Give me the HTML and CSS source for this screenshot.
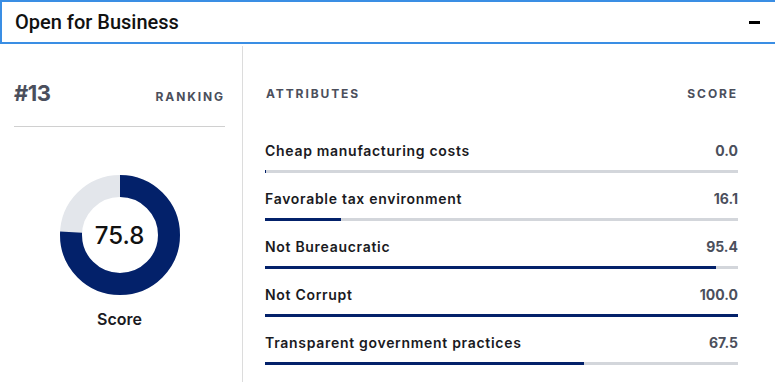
FILE: index.html
```html
<!DOCTYPE html>
<html lang="en">
<head>
  <meta charset="UTF-8" />
  <meta name="viewport" content="width=device-width, initial-scale=1.0"/>
  <title>Open for Business</title>
  <link rel="stylesheet" href="styles.css">
</head>
<body>

  <section class="panel">
    <div class="panel-head">
      <h2>Open for Business</h2>
      <span class="toggle"></span>
    </div>

    <div class="panel-body">
      <div class="summary">
        <div class="rank-row">
          <span class="rank">#13</span>
          <span class="caption">Ranking</span>
        </div>

        <div class="donut">
          <svg width="120" height="120" viewBox="0 0 120 120">
            <circle cx="60" cy="60" r="49" fill="none" stroke="#e3e6eb" stroke-width="22"/>
            <circle cx="60" cy="60" r="49" fill="none" stroke="#03216a" stroke-width="22"
              stroke-dasharray="233.4 307.9" transform="rotate(-90 60 60)"/>
          </svg>
          <span class="donut-value">75.8</span>
        </div>
        <div class="donut-label">Score</div>
      </div>

      <div class="attributes">
        <div class="attr-head">
          <span class="caption">Attributes</span>
          <span class="caption">Score</span>
        </div>

        <div class="attr">
          <div class="attr-line"><span>Cheap manufacturing costs</span><span class="val">0.0</span></div>
          <div class="bar"><div class="fill" style="width:0.3%"></div></div>
        </div>
        <div class="attr">
          <div class="attr-line"><span>Favorable tax environment</span><span class="val">16.1</span></div>
          <div class="bar"><div class="fill" style="width:16.1%"></div></div>
        </div>
        <div class="attr">
          <div class="attr-line"><span>Not Bureaucratic</span><span class="val">95.4</span></div>
          <div class="bar"><div class="fill" style="width:95.4%"></div></div>
        </div>
        <div class="attr">
          <div class="attr-line"><span>Not Corrupt</span><span class="val">100.0</span></div>
          <div class="bar"><div class="fill" style="width:100%"></div></div>
        </div>
        <div class="attr">
          <div class="attr-line"><span>Transparent government practices</span><span class="val">67.5</span></div>
          <div class="bar"><div class="fill" style="width:67.5%"></div></div>
        </div>
      </div>
    </div>
  </section>

</body>
</html>
```

FILE: styles.css
```css
*, *::before, *::after {
  box-sizing: border-box;
}

* {
  margin: 0;
}

body {
  margin: 0;
  background: #fff;
  font-family: 'Inter', sans-serif;
  -webkit-font-smoothing: antialiased;
  overflow: hidden;
}

/* header bar */
.panel-head {
  height: 44px;
  border: 2px solid #3a8ee4;
  border-right: none;
  display: flex;
  align-items: center;
  justify-content: space-between;
  padding: 0 15px 0 13px;
}

.panel-head h2 {
  font-family: 'Roboto', sans-serif;
  font-size: 20px;
  font-weight: 500;
  color: #111;
  line-height: 1;
  margin-top: -1px;
}

.toggle {
  width: 11px;
  height: 3px;
  background: #000;
}

.panel-body {
  display: grid;
  grid-template-columns: 243px 1fr;
  margin-top: 2px;
  height: 336px;
}

/* left column */
.summary {
  border-right: 1px solid #dcdcdc;
  padding: 0 17px 0 14px;
}

.rank-row {
  display: flex;
  justify-content: space-between;
  align-items: baseline;
  padding-top: 33px;
  padding-bottom: 19px;
  border-bottom: 1px solid #d0d0d0;
}

.rank {
  font-size: 22px;
  font-weight: 700;
  color: #4b4f5c;
  letter-spacing: -0.5px;
  line-height: 28px;
}

.caption {
  font-size: 12px;
  font-weight: 700;
  color: #4b4f5c;
  text-transform: uppercase;
  letter-spacing: 1.9px;
}

.donut {
  position: relative;
  width: 120px;
  height: 120px;
  margin: 48px auto 0;
}

.donut svg {
  display: block;
}

.donut-value {
  position: absolute;
  inset: 0;
  display: flex;
  align-items: center;
  justify-content: center;
  font-size: 24px;
  font-weight: 500;
  color: #111;
}

.donut-label {
  text-align: center;
  font-size: 16px;
  font-weight: 600;
  color: #1a1a22;
  margin-top: 14px;
}

/* right column */
.attributes {
  padding: 0 37px 0 22px;
}

.attr-head {
  display: flex;
  justify-content: space-between;
  padding-top: 40px;
  padding-left: 1px;
  line-height: 16px;
  margin-bottom: 39px;
}

.attr {
  margin-bottom: 16px;
}

.attr-line {
  display: flex;
  justify-content: space-between;
  font-size: 14px;
  font-weight: 600;
  color: #1a1a22;
  letter-spacing: 0.7px;
  line-height: 20px;
  margin-bottom: 9px;
}

.attr-line .val {
  color: #4b4f5c;
  font-weight: 700;
  letter-spacing: 0;
}

.bar {
  height: 3px;
  background: #d3d6db;
}

.fill {
  height: 100%;
  background: #03216a;
}
```
